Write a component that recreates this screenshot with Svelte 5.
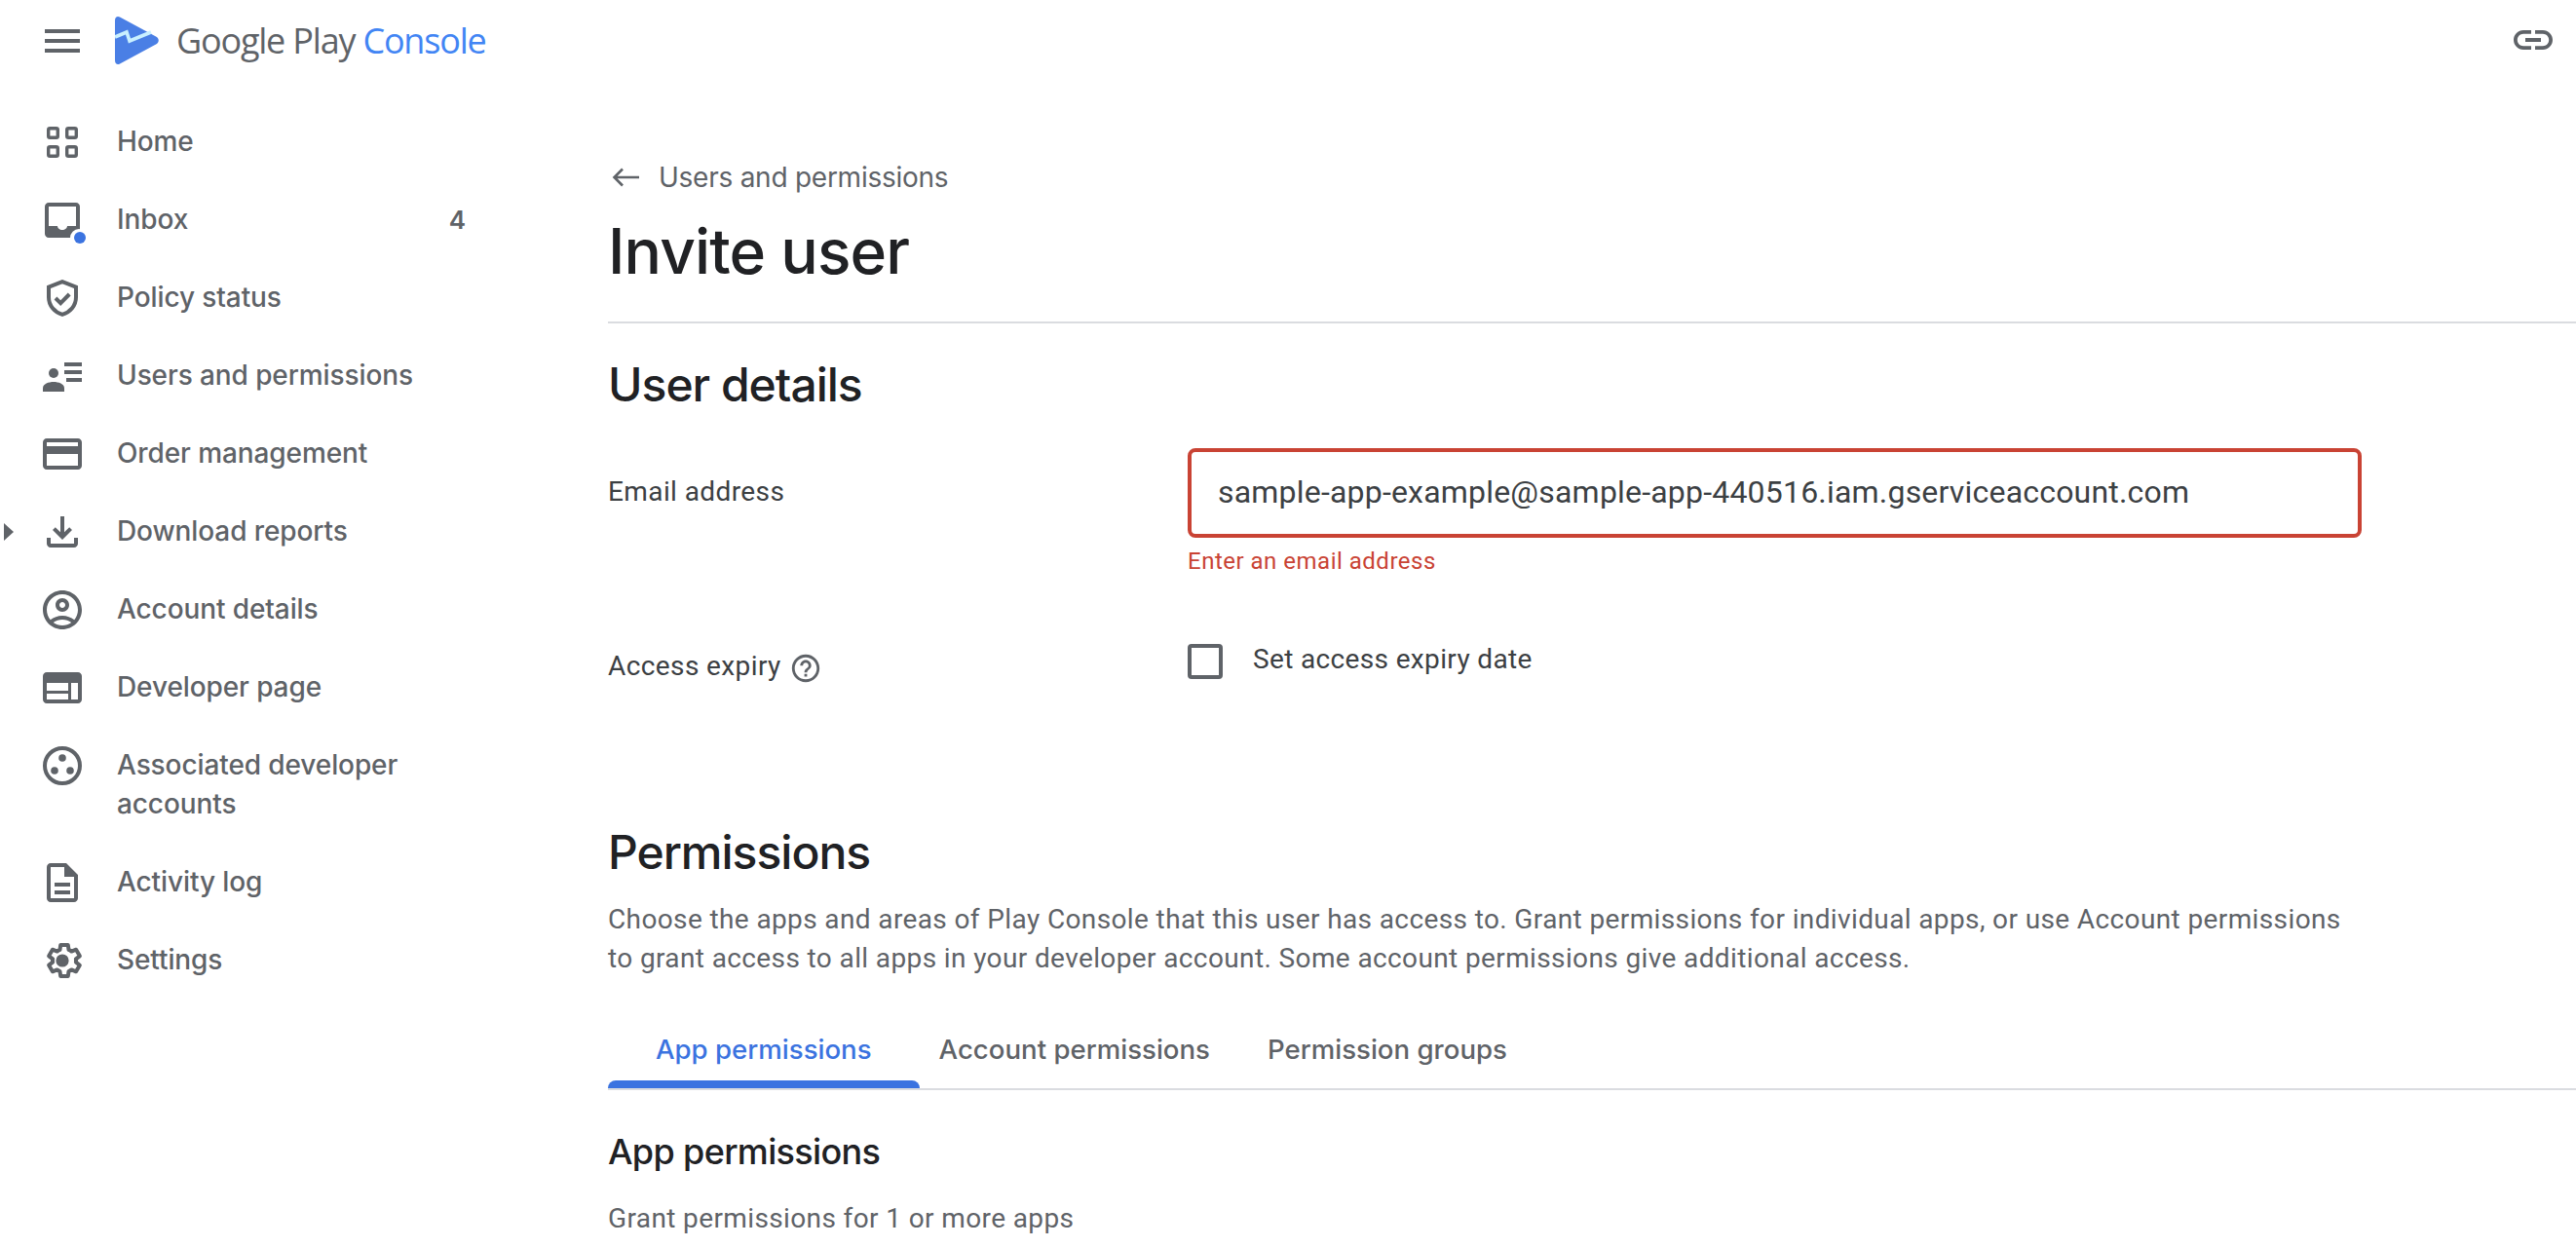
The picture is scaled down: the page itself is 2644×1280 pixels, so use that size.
<script>
  const nav = [
    { key: 'home', label: 'Home' },
    { key: 'inbox', label: 'Inbox', count: 4 },
    { key: 'policy', label: 'Policy status' },
    { key: 'users', label: 'Users and permissions' },
    { key: 'card', label: 'Order management' },
    { key: 'download', label: 'Download reports', caret: true },
    { key: 'account', label: 'Account details' },
    { key: 'web', label: 'Developer page' },
    { key: 'assoc', label: 'Associated developer accounts' },
    { key: 'doc', label: 'Activity log' },
    { key: 'cog', label: 'Settings' }
  ];
  const tabs = ['App permissions', 'Account permissions', 'Permission groups'];
</script>

<div class="page">
  <header class="top">
    <svg class="icon" viewBox="0 0 24 24"><path d="M3 18h18v-2H3v2zm0-5h18v-2H3v2zm0-7v2h18V6H3z"/></svg>
    <svg class="logo" viewBox="0 0 45 49">
      <path fill="#4a7fe5" d="M0 4C0 .6 2.500-.8 5 .6L42.500 20.800c3 1.700 3 5.700 0 7.400L5 48.400C2.500 49.800 0 48.400 0 45z"/>
      <path fill="none" stroke="#c9f0ff" stroke-width="3.600" d="M0 21l12-5 3 9 22-9"/>
    </svg>
    <div class="brand">Google Play <span>Console</span></div>
    <svg class="icon link" viewBox="0 0 24 24"><path d="M3.900 12c0-1.710 1.390-3.100 3.100-3.100h4V7H7c-2.760 0-5 2.240-5 5s2.240 5 5 5h4v-1.900H7c-1.710 0-3.100-1.390-3.100-3.100zM8 13h8v-2H8v2zm9-6h-4v1.900h4c1.710 0 3.100 1.390 3.100 3.100s-1.390 3.100-3.100 3.100h-4V17h4c2.760 0 5-2.240 5-5s-2.240-5-5-5z"/></svg>
  </header>

  <div class="body">
    <aside class="side">
      {#each nav as item}
        <div class="item">
          {#if item.caret}<span class="caret"></span>{/if}
          <svg class="icon" viewBox="0 0 24 24">
            {#if item.key === 'home'}
              <g fill="none" stroke="#5f6368" stroke-width="1.700">
                <rect x="4.850" y="4.850" width="4.800" height="4.800" rx=".8"/>
                <rect x="14.350" y="4.850" width="4.800" height="4.800" rx=".8"/>
                <rect x="4.850" y="14.350" width="4.800" height="4.800" rx=".8"/>
                <rect x="14.350" y="14.350" width="4.800" height="4.800" rx=".8"/>
              </g>
            {:else if item.key === 'inbox'}
              <path fill-rule="evenodd" d="M19 3H5C3.900 3 3 3.900 3 5v14c0 1.100.9 2 2 2h14c1.100 0 2-.9 2-2V5c0-1.100-.9-2-2-2zM5 5h14v10h-4.500c0 1.100-1.100 2-2.500 2s-2.500-.9-2.500-2H5z"/>
              <circle cx="20.500" cy="21" r="4.500" fill="#fff"/>
              <circle cx="21" cy="21" r="3" fill="#3b73e0"/>
            {:else if item.key === 'policy'}
              <path fill="none" stroke="#5f6368" stroke-width="2" d="M12 3.600 5 6.300v5.200c0 4.300 2.900 7.700 7 8.900 4.100-1.200 7-4.600 7-8.900V6.300z"/>
              <path fill="none" stroke="#5f6368" stroke-width="2" d="m8.500 12 2.600 2.600 4.500-4.600"/>
            {:else if item.key === 'users'}
              <circle cx="7.500" cy="10.500" r="2.500"/>
              <path d="M2 20v-1.800C2 16 5 15 7.500 15s5.500 1 5.500 3.200V20z"/>
              <path d="M13 5h9v2h-9zM13 9h9v2h-9zM14 13h8v2h-8z"/>
            {:else if item.key === 'card'}
              <path d="M20 4H4c-1.110 0-1.990.89-1.990 2L2 18c0 1.110.89 2 2 2h16c1.110 0 2-.89 2-2V6c0-1.110-.89-2-2-2zm0 14H4v-6h16v6zm0-10H4V6h16v2z"/>
            {:else if item.key === 'download'}
              <path d="M18 15v3H6v-3H4v3c0 1.100.9 2 2 2h12c1.100 0 2-.9 2-2v-3h-2zm-1-4l-1.410-1.410L13 12.170V4h-2v8.170L8.410 9.590 7 11l5 5 5-5z"/>
            {:else if item.key === 'account'}
              <path d="M12 2C6.480 2 2 6.480 2 12s4.480 10 10 10 10-4.480 10-10S17.520 2 12 2zM7.350 18.500C8.660 17.560 10.260 17 12 17s3.340.56 4.650 1.500c-1.310.94-2.910 1.500-4.650 1.500s-3.340-.56-4.650-1.500zm10.790-1.380C16.450 15.800 14.320 15 12 15s-4.450.8-6.140 2.120C4.700 15.730 4 13.950 4 12c0-4.420 3.580-8 8-8s8 3.580 8 8c0 1.950-.7 3.730-1.860 5.120z"/>
              <path d="M12 6c-1.930 0-3.500 1.570-3.500 3.500S10.070 13 12 13s3.500-1.570 3.500-3.500S13.930 6 12 6zm0 5c-.83 0-1.500-.67-1.500-1.500S11.170 8 12 8s1.500.67 1.500 1.500S12.830 11 12 11z"/>
            {:else if item.key === 'web'}
              <path fill-rule="evenodd" d="M20 4H4C2.900 4 2 4.900 2 6v12c0 1.100.9 2 2 2h16c1.100 0 2-.9 2-2V6c0-1.100-.9-2-2-2zM4 9.500h11v4H4zM4 15h11v3H4zM16.500 9.500H20V18h-3.500z"/>
            {:else if item.key === 'assoc'}
              <circle cx="12" cy="12" r="9" fill="none" stroke="#5f6368" stroke-width="2"/>
              <circle cx="12" cy="8" r="1.900"/>
              <circle cx="8" cy="14.500" r="1.900"/>
              <circle cx="16" cy="14.500" r="1.900"/>
            {:else if item.key === 'doc'}
              <path d="M8 16h8v2H8zm0-4h8v2H8zM14 2H6c-1.100 0-2 .9-2 2v16c0 1.100.89 2 1.990 2H18c1.100 0 2-.9 2-2V8l-6-6zm4 18H6V4h7v5h5v11z"/>
            {:else if item.key === 'cog'}
              <path fill="none" stroke="#5f6368" stroke-width="2" stroke-linejoin="round" d="M18.400 12.800c.03-.26.05-.53.05-.8s-.02-.54-.06-.8l2-1.550-1.900-3.300-2.350.95c-.44-.33-.92-.62-1.420-.82L14.350 4h-3.800l-.36 2.480c-.5.2-.98.49-1.420.82l-2.350-.95-1.900 3.300 2 1.550c-.04.26-.07.53-.07.8s.03.54.07.8l-2 1.550 1.900 3.300 2.350-.95c.44.33.92.62 1.420.82l.36 2.480h3.800l.36-2.480c.5-.2.98-.49 1.420-.82l2.350.95 1.900-3.300z" transform="translate(.55 0)"/>
              <circle cx="12" cy="12" r="3.300"/>
            {/if}
          </svg>
          <span class="label">{item.label}</span>
          {#if item.count}<span class="count">{item.count}</span>{/if}
        </div>
      {/each}
    </aside>

    <main class="main">
      <div class="back">
        <svg class="arrow" viewBox="0 0 28 20"><path fill="none" stroke="#5f6368" stroke-width="2.600" d="M28 10H3M11 1.500 2.500 10l8.500 8.500"/></svg>
        <span>Users and permissions</span>
      </div>
      <h1>Invite user</h1>

      <h2 class="details">User details</h2>
      <div class="form">
        <div class="flabel first">Email address</div>
        <div>
          <div class="input">sample-app-example@sample-app-440516.iam.gserviceaccount.com</div>
          <div class="error">Enter an email address</div>
        </div>
        <div class="flabel second">
          Access expiry
          <svg class="help" viewBox="0 0 24 24"><path fill="#5f6368" d="M11 18h2v-2h-2v2zm1-16C6.480 2 2 6.480 2 12s4.480 10 10 10 10-4.480 10-10S17.520 2 12 2zm0 18c-4.410 0-8-3.590-8-8s3.590-8 8-8 8 3.590 8 8-3.590 8-8 8zm0-14c-2.210 0-4 1.790-4 4h2c0-1.100.9-2 2-2s2 .9 2 2c0 2-3 1.750-3 5h2c0-2.250 3-2.500 3-5 0-2.210-1.790-4-4-4z"/></svg>
        </div>
        <div class="check">
          <span class="box"></span>
          <span class="checktext">Set access expiry date</span>
        </div>
      </div>

      <h2 class="perm">Permissions</h2>
      <p class="desc">Choose the apps and areas of Play Console that this user has access to. Grant permissions for individual apps, or use Account permissions<br />to grant access to all apps in your developer account. Some account permissions give additional access.</p>

      <div class="tabs">
        {#each tabs as tab, i}
          <div class="tab" class:active={i === 0}>
            <span>{tab}</span>
            <i></i>
          </div>
        {/each}
      </div>

      <h3>App permissions</h3>
      <p class="grant">Grant permissions for 1 or more apps</p>
    </main>
  </div>
</div>

<style>
  :global(body) { margin: 0; background: #fff; overflow: hidden; }
  .page { width: 2644px; height: 1280px; overflow: hidden; font-family: Roboto, "Liberation Sans", sans-serif; color: #202124; }
  .top { height: 84px; display: flex; align-items: center; padding-left: 40px; }
  .icon { width: 48px; height: 48px; flex: none; fill: #5f6368; }
  .logo { width: 45px; height: 49px; margin-left: 30px; margin-top: -2px; flex: none; }
  .brand { margin-left: 18px; font-family: "Open Sans", sans-serif; font-size: 36px; letter-spacing: -1.200px; color: #5f6368; line-height: 48px; }
  .brand span { color: #4285f4; }
  .link { margin-left: auto; margin-right: 20px; margin-top: -2px; }
  .body { display: flex; }
  .side { width: 500px; padding-top: 22px; flex: none; box-sizing: border-box; padding-right: 22px; }
  .item { display: flex; align-items: flex-start; padding: 20px 0 20px 40px; position: relative; }
  .item .icon { margin: -4px 32px -4px 0; }
  .label { flex: 1; margin: -1px 0 1px; font-family: Inter, sans-serif; font-size: 28px; letter-spacing: -.1px; font-weight: 500; line-height: 40px; color: #5f6368; }
  .count { font-family: Inter, sans-serif; font-size: 26px; font-weight: 600; line-height: 40px; color: #5f6368; }
  .caret { position: absolute; left: 4px; top: 31px; width: 0; height: 0; border-left: 10px solid #5f6368; border-top: 9.500px solid transparent; border-bottom: 9.500px solid transparent; }
  .main { flex: 1; min-width: 0; padding-left: 124px; }
  .back { display: flex; align-items: center; margin-top: 78px; height: 40px; font-size: 28px; color: #5f6368; font-family: Inter, sans-serif; letter-spacing: -.25px; }
  .arrow { width: 28px; height: 20px; margin-left: 4px; margin-right: 20px; }
  h1 { margin: 16px 0 0; padding-bottom: 32px; border-bottom: 2px solid #dadce0; font-family: Inter, sans-serif; font-weight: 500; font-size: 64px; line-height: 80px; letter-spacing: -.9px; }
  h2 { margin: 0; font-family: Inter, sans-serif; font-weight: 500; font-size: 48px; line-height: 56px; letter-spacing: -1px; }
  .details { margin-top: 35px; }
  .form { display: grid; grid-template-columns: 595px 1205px; row-gap: 69px; margin-top: 37px; }
  .flabel { font-size: 28px; line-height: 40px; color: #3c4043; letter-spacing: .4px; }
  .first { padding-top: 25px; }
  .second { padding-top: 3px; display: flex; align-items: center; gap: 8px; align-self: start; }
  .help { width: 34px; height: 34px; margin-top: 4px; }
  .input { height: 92px; box-sizing: border-box; border: 4px solid #c94334; border-radius: 8px; padding-left: 27px; font-size: 32px; line-height: 82px; letter-spacing: .2px; color: #3c4043; white-space: nowrap; }
  .error { margin-top: 8px; line-height: 32px; font-size: 24px; letter-spacing: .5px; color: #c94334; }
  .check { display: flex; align-items: flex-start; gap: 31px; }
  .box { width: 36px; height: 36px; box-sizing: border-box; border: 4px solid #5f6368; border-radius: 4px; flex: none; }
  .checktext { font-size: 28px; line-height: 40px; margin-top: -4px; letter-spacing: .35px; color: #3c4043; }
  .perm { margin-top: 143px; }
  .desc { margin: 21px 0 0; font-size: 28px; line-height: 40px; letter-spacing: .38px; color: #5f6368; white-space: nowrap; }
  .tabs { display: flex; margin-top: 53px; border-bottom: 2px solid #dadce0; }
  .tab { display: flex; flex-direction: column; padding: 0 20px; font-family: Inter, sans-serif; font-weight: 500; font-size: 27.600px; line-height: 40px; color: #5f6368; }
  .tab:last-child { margin-left: 19px; }
  .tab i { display: block; height: 8px; margin-top: 12px; border-radius: 8px 8px 0 0; }
  .tab.active { padding: 0 49px; color: #3b73e0; }
  .tab.active i { margin: 12px -49px 0; background: #3b73e0; }
  h3 { margin: 39px 0 0; font-family: Inter, sans-serif; font-weight: 500; font-size: 36px; line-height: 48px; letter-spacing: -.65px; }
  .grant { margin: 25px 0 0; font-size: 28px; line-height: 40px; letter-spacing: .38px; color: #5f6368; }
</style>
